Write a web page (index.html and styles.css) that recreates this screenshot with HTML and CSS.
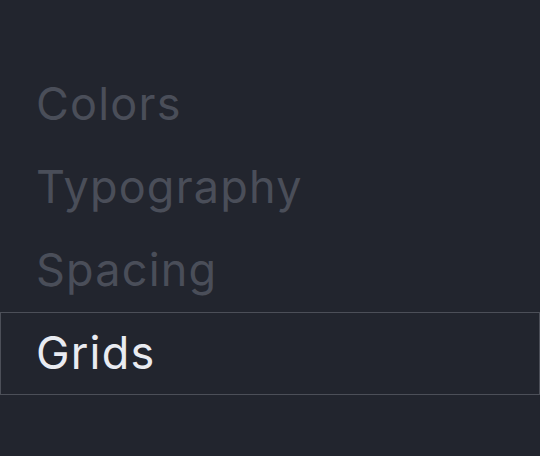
FILE: index.html
```html
<!DOCTYPE html>
<html>
<head>
<meta charset="utf-8">
<link rel="stylesheet" href="styles.css">
</head>
<body>
<nav class="menu">
  <div class="item">Colors</div>
  <div class="item">Typography</div>
  <div class="item">Spacing</div>
  <div class="item active">Grids</div>
</nav>
</body>
</html>
```
FILE: styles.css
```css
html, body {
  margin: 0;
  padding: 0;
  background: #22252e;
  height: 100%;
}
body {
  font-family: Inter, "Noto Sans", sans-serif;
}
.menu {
  display: flex;
  flex-direction: column;
  padding-top: 63px;
}
.item {
  height: 83px;
  box-sizing: border-box;
  display: flex;
  align-items: center;
  padding-left: 35px;
  padding-bottom: 3px;
  font-size: 45px;
  letter-spacing: 1.2px;
  color: #4a4e59;
  border: 1px solid transparent;
}
.item.active {
  color: #e9ebf1;
  border-color: #4c4f58;
}
```
